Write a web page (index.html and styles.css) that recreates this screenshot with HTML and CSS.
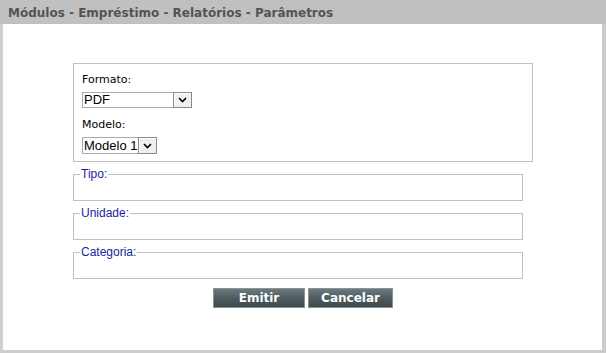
FILE: index.html
```html
<!DOCTYPE html>
<html lang="pt">
<head>
<meta charset="utf-8">
<title>Parâmetros</title>
<link rel="stylesheet" href="styles.css">
</head>
<body>
<div class="frame">
  <div class="header">Módulos - Empréstimo - Relatórios - Parâmetros</div>
  <div class="content">
    <div class="panel">
      <div class="box">
        <label class="lbl" for="formato">Formato:</label>
        <span class="sel sel-pdf">
          <select id="formato"><option>PDF</option></select>
          <span class="arrow"><svg width="9" height="6" viewBox="0 0 9 6"><path d="M1 1 L4.5 4.5 L8 1" fill="none" stroke="#000" stroke-width="1.6"/></svg></span>
        </span>
        <label class="lbl" for="modelo">Modelo:</label>
        <span class="sel sel-modelo">
          <select id="modelo"><option>Modelo 1</option></select>
          <span class="arrow"><svg width="9" height="6" viewBox="0 0 9 6"><path d="M1 1 L4.5 4.5 L8 1" fill="none" stroke="#000" stroke-width="1.6"/></svg></span>
        </span>
      </div>
      <fieldset class="fs"><legend>Tipo:</legend></fieldset>
      <fieldset class="fs"><legend>Unidade:</legend></fieldset>
      <fieldset class="fs"><legend>Categoria:</legend></fieldset>
      <div class="actions">
        <button class="btn btn-emitir" type="button">Emitir</button>
        <button class="btn btn-cancelar" type="button">Cancelar</button>
      </div>
    </div>
  </div>
</div>
</body>
</html>
```

FILE: styles.css
```css
html, body {
  margin: 0;
  padding: 0;
  background: #fff;
}
.frame {
  width: 606px;
  height: 353px;
  box-sizing: border-box;
  border-left: 3px solid #d0d0d0;
  border-right: 4px solid #cccccc;
  border-bottom: 3px solid #cccccc;
  background: #fff;
  display: flex;
  flex-direction: column;
}
.header {
  height: 24px;
  background: #c0c0c0;
  margin-left: -3px;
  margin-right: -4px;
  padding-left: 8px;
  font-family: "DejaVu Sans", Verdana, sans-serif;
  font-weight: bold;
  font-size: 12px;
  line-height: 26px;
  color: #545454;
  box-sizing: border-box;
}
.content {
  padding-top: 39px;
  padding-left: 70px;
}
.panel {
  width: 460px;
  display: flex;
  flex-direction: column;
}
.box {
  border: 1px solid #c0c0c0;
  box-sizing: border-box;
  height: 99px;
  padding: 9px 8px 0 8px;
  display: flex;
  flex-direction: column;
  align-items: flex-start;
}
.lbl {
  font-family: "DejaVu Sans", Verdana, sans-serif;
  font-size: 11px;
  line-height: 14px;
  color: #000;
  height: 14px;
}
.lbl + .sel { margin-top: 5px; }
.sel + .lbl { margin-top: 10px; }
.sel {
  position: relative;
  display: block;
  box-sizing: border-box;
  border: 1px solid #a5acb2;
  background: #fff;
}
.sel select {
  appearance: none;
  -webkit-appearance: none;
  border: 0;
  margin: 0;
  padding: 0 0 0 1px;
  background: transparent;
  font-family: "Liberation Sans", Arial, sans-serif;
  font-size: 13px;
  line-height: 14px;
  height: 14px;
  color: #000;
  width: 100%;
  display: block;
}
.sel-pdf { width: 110px; height: 16px; }
.sel-modelo { width: 75px; height: 17px; }
.sel-modelo select { height: 15px; line-height: 15px; }
.arrow {
  position: absolute;
  top: -1px;
  right: -1px;
  bottom: -1px;
  width: 19px;
  box-sizing: border-box;
  border: 1px solid #8a8a8a;
  background: #f0f0f0;
  box-shadow: inset 1px 1px 0 #ffffff;
  display: flex;
  align-items: center;
  justify-content: center;
  pointer-events: none;
}
.fs {
  width: 450px;
  box-sizing: border-box;
  margin: 5px 0 0 0;
  padding: 0;
  border: 1px solid #c0c0c0;
  height: 34px;
  min-width: 0;
}
.fs legend {
  font-family: "Liberation Sans", Arial, sans-serif;
  font-size: 12px;
  line-height: 14px;
  color: #1e1ea0;
  padding: 0 1px;
  margin-left: 6px;
}
.actions {
  margin-top: 9px;
  display: flex;
  gap: 3px;
  padding-left: 140px;
}
.btn {
  height: 20px;
  box-sizing: border-box;
  border: 1px solid #8a9496;
  background: linear-gradient(#6a7a7e, #4a575b 60%, #3f4b4f);
  color: #fff;
  font-family: "DejaVu Sans", Verdana, sans-serif;
  font-weight: bold;
  font-size: 12px;
  line-height: 18px;
  padding: 0;
  margin: 0;
  text-align: center;
}
.btn-emitir { width: 92px; }
.btn-cancelar { width: 85px; }
```
